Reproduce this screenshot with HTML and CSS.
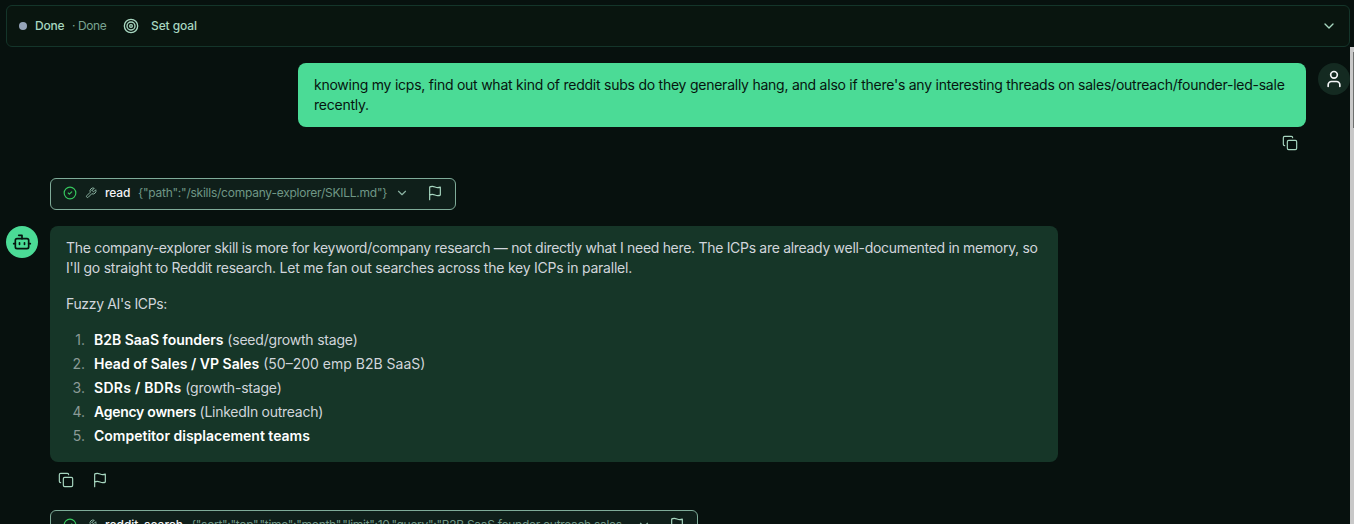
FILE: index.html
```html
<!DOCTYPE html>
<html lang="en">
<head>
    <meta charset="UTF-8">
    <meta name="viewport" content="width=device-width, initial-scale=1.0">
    <title>Chat</title>
    <link rel="stylesheet" href="styles.css">
</head>
<body>
    <svg class="sprite">
        <symbol id="copy" viewBox="0 0 24 24"><rect x="8" y="8" width="14" height="14" rx="2"/><path d="M4 16c-1.1 0-2-.9-2-2V4c0-1.1.9-2 2-2h10c1.1 0 2 .9 2 2"/></symbol>
        <symbol id="flag" viewBox="0 0 24 24"><path d="M4 15s1-1 4-1 5 2 8 2 4-1 4-1V3s-1 1-4 1-5-2-8-2-4 1-4 1zM4 22v-7"/></symbol>
        <symbol id="chevron" viewBox="0 0 24 24"><path d="m6 9 6 6 6-6"/></symbol>
        <symbol id="check" viewBox="0 0 24 24"><circle cx="12" cy="12" r="10"/><path d="m9 12 2 2 4-4"/></symbol>
        <symbol id="wrench" viewBox="0 0 24 24"><path d="M14.7 6.3a1 1 0 0 0 0 1.4l1.6 1.6a1 1 0 0 0 1.4 0l3.77-3.77a6 6 0 0 1-7.94 7.94l-6.91 6.91a2.12 2.12 0 0 1-3-3l6.91-6.91a6 6 0 0 1 7.94-7.94l-3.76 3.76z"/></symbol>
    </svg>

    <header class="status-bar">
        <span class="dot"></span>
        <span class="status">Done</span>
        <span class="detail">· Done</span>
        <svg class="icon goal-icon" viewBox="0 0 24 24"><circle cx="12" cy="12" r="10"/><circle cx="12" cy="12" r="6"/><circle cx="12" cy="12" r="2"/></svg>
        <span class="goal">Set goal</span>
        <svg class="icon expand"><use href="#chevron"/></svg>
    </header>

    <div class="chat">
        <main class="messages">
            <div class="row user-row">
                <div class="bubble user">
                    <span class="line u1">knowing my icps, find out what kind of reddit subs do they generally hang, and also if there's any interesting threads on sales/outreach/founder-led-sale</span>
                    <span class="line u1">recently.</span>
                </div>
                <div class="avatar user-avatar">
                    <svg class="icon" viewBox="0 0 24 24"><path d="M19 21v-2a4 4 0 0 0-4-4H9a4 4 0 0 0-4 4v2"/><circle cx="12" cy="7" r="4"/></svg>
                </div>
            </div>
            <div class="actions user-actions">
                <svg class="icon"><use href="#copy"/></svg>
            </div>

            <div class="tool">
                <svg class="icon check"><use href="#check"/></svg>
                <svg class="icon wrench"><use href="#wrench"/></svg>
                <span class="tool-name">read</span>
                <span class="args args-read">{"path":"/skills/company-explorer/SKILL.md"}</span>
                <svg class="icon chevron"><use href="#chevron"/></svg>
                <svg class="icon flag"><use href="#flag"/></svg>
            </div>

            <div class="row bot-row">
                <div class="avatar bot-avatar">
                    <svg class="icon" viewBox="0 0 24 24"><path d="M12 8V4H8"/><rect x="4" y="8" width="16" height="12" rx="2"/><path d="M2 14h2M20 14h2M15 13v2M9 13v2"/></svg>
                </div>
                <div class="bubble bot">
                    <p>
                        <span class="line b1">The company-explorer skill is more for keyword/company research — not directly what I need here. The ICPs are already well-documented in memory, so</span>
                        <span class="line b2">I'll go straight to Reddit research. Let me fan out searches across the key ICPs in parallel.</span>
                    </p>
                    <p class="intro">Fuzzy AI's ICPs:</p>
                    <ol>
                        <li class="tight"><strong>B2B SaaS founders</strong> (seed/growth stage)</li>
                        <li><strong>Head of Sales / VP Sales</strong> (50–200 emp B2B SaaS)</li>
                        <li class="tight"><strong class="wide">SDRs / BDRs</strong> (growth-stage)</li>
                        <li class="tighter"><strong class="narrow">Agency owners</strong> (LinkedIn outreach)</li>
                        <li><strong>Competitor displacement teams</strong></li>
                    </ol>
                </div>
            </div>
            <div class="actions bot-actions">
                <svg class="icon"><use href="#copy"/></svg>
                <svg class="icon"><use href="#flag"/></svg>
            </div>

            <div class="tool tool-wide">
                <svg class="icon check"><use href="#check"/></svg>
                <svg class="icon wrench"><use href="#wrench"/></svg>
                <span class="tool-name search-name">reddit_search</span>
                <span class="args args-search">{"sort":"top","time":"month","limit":10,"query":"B2B SaaS founder outreach sales…</span>
                <svg class="icon chevron"><use href="#chevron"/></svg>
                <svg class="icon flag"><use href="#flag"/></svg>
            </div>
        </main>
        <div class="scrollbar"><div class="thumb"></div></div>
    </div>
</body>
</html>
```
FILE: styles.css
```css
* {
    box-sizing: border-box;
}
body {
    display: flex;
    flex-direction: column;
    height: 100vh;
    margin: 0;
    padding-top: 5px;
    overflow: hidden;
    background: #07110e;
    color: #d1d5db;
    font-family: Inter, "Liberation Sans", sans-serif;
    font-size: 14px;
    line-height: 20px;
}
.sprite {
    display: none;
}
.icon {
    flex: none;
    width: 16px;
    height: 16px;
    fill: none;
    stroke: currentColor;
    stroke-width: 2;
    stroke-linecap: round;
    stroke-linejoin: round;
}
.status-bar {
    display: flex;
    flex: none;
    align-items: center;
    height: 42px;
    margin: 0 4px 0 6px;
    padding: 0 12px;
    border: 1px solid #14352a;
    border-radius: 6px;
    background: #09150f;
    color: #a7d7c0;
    font-size: 12px;
}
.dot {
    width: 8px;
    height: 8px;
    margin-right: 8px;
    border-radius: 50%;
    background: #94a3b8;
}
.status {
    width: 37px;
    font-weight: 500;
    letter-spacing: -0.2px;
}
.detail {
    width: 51px;
    color: #79a391;
    letter-spacing: -0.4px;
}
.goal-icon {
    margin-right: 12px;
}
.goal {
    font-weight: 500;
    letter-spacing: -0.1px;
}
.expand {
    margin-left: auto;
}
.chat {
    display: flex;
    flex: 1;
    min-height: 0;
}
.messages {
    flex: 1;
    padding: 16px 0 0 6px;
    overflow: hidden;
}
.scrollbar {
    width: 4px;
    padding: 5px 0 0 3px;
    background: #c8c8c8;
}
.thumb {
    height: 76px;
    background: #6e706f;
}
.row {
    display: flex;
    gap: 12px;
}
.user-row {
    justify-content: flex-end;
}
.bubble {
    width: 1008px;
    padding: 12px 16px;
    border-radius: 8px;
}
.user {
    height: 64px;
    background: #4bdb96;
    color: #06150f;
}
.line {
    display: block;
    white-space: nowrap;
}
.u1 {
    letter-spacing: -0.243px;
}
.b1 {
    letter-spacing: -0.304px;
}
.b2 {
    letter-spacing: -0.235px;
}
.intro {
    letter-spacing: -0.35px;
}
.avatar {
    display: flex;
    flex: none;
    align-items: center;
    justify-content: center;
    width: 32px;
    height: 32px;
    border-radius: 50%;
}
.avatar .icon {
    width: 20px;
    height: 20px;
}
.user-avatar {
    background: #142a21;
    color: #f3f4f6;
}
.bot-avatar {
    background: #4bdb96;
    color: #06150f;
}
.actions {
    display: flex;
    gap: 18px;
    color: #a7d7c0;
}
.actions .icon {
    stroke-width: 1.75;
}
.user-actions {
    justify-content: flex-end;
    padding: 8px 52px 27px 0;
}
.bot-actions {
    padding: 10px 0 22px 52px;
}
.tool {
    display: flex;
    align-items: center;
    width: 406px;
    height: 32px;
    margin: 0 0 16px 44px;
    padding: 0 12px 2px;
    border: 1px solid #7fac99;
    border-radius: 6px;
    background: #0f1f1a;
    font-size: 12px;
    white-space: nowrap;
}
.tool-wide {
    width: 648px;
}
.check {
    width: 14px;
    height: 14px;
    margin-right: 8px;
    color: #36c75e;
}
.wrench {
    width: 12px;
    height: 12px;
    margin-right: 8px;
    color: #8bb3a2;
}
.tool-name {
    width: 33px;
    color: #f3f4f6;
    font-weight: 500;
    letter-spacing: -0.15px;
}
.search-name {
    width: 86px;
    letter-spacing: 0;
}
.args {
    width: 249px;
    margin-right: 8px;
    color: #6f9786;
    letter-spacing: -0.24px;
}
.args-search {
    width: 438px;
    letter-spacing: -0.3px;
}
.chevron {
    width: 14px;
    height: 14px;
    color: #8bb3a2;
}
.flag {
    margin-left: auto;
    color: #a7d7c0;
    stroke-width: 1.75;
}
.bot {
    background: #163628;
}
.bot p {
    margin: 0 0 16px;
}
.bot ol {
    margin: 0;
    padding: 0;
    list-style: none;
    counter-reset: item;
}
.bot li {
    padding-bottom: 4px;
    counter-increment: item;
}
.bot li::before {
    display: inline-block;
    width: 19px;
    padding-right: 9px;
    color: #8b9a97;
    letter-spacing: 0;
    text-align: right;
    content: counter(item) ".";
}
.tight {
    letter-spacing: -0.2px;
}
.tighter {
    letter-spacing: -0.27px;
}
.bot strong {
    color: #fff;
    font-weight: 600;
    letter-spacing: 0;
}
.bot .wide {
    letter-spacing: 0.27px;
}
.bot .narrow {
    letter-spacing: -0.27px;
}
```
